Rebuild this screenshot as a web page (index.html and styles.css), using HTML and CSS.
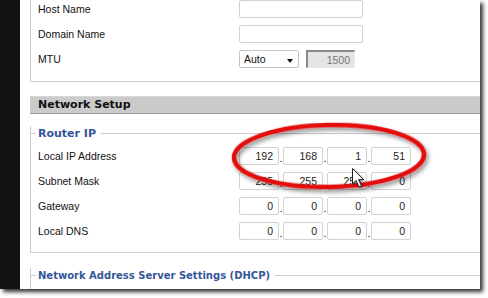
FILE: index.html
```html
<!DOCTYPE html>
<html lang="en">
<head>
    <meta charset="UTF-8">
    <title>Network Setup</title>
    <link rel="stylesheet" href="styles.css">
</head>
<body>
    <div class="screen">
        <div class="sheet">
            <div class="strip"></div>
            <div class="page">

                <div class="group top-group">
                    <div class="row">
                        <div class="label">Host Name</div>
                        <div class="field text-field"></div>
                    </div>
                    <div class="row">
                        <div class="label">Domain Name</div>
                        <div class="field text-field"></div>
                    </div>
                    <div class="row">
                        <div class="label">MTU</div>
                        <div class="field select-field">Auto<span class="caret"></span></div>
                        <div class="field mtu-value">1500</div>
                    </div>
                </div>

                <div class="section-bar">Network Setup</div>

                <div class="group legend-group">
                    <div class="legend">Router IP</div>
                    <div class="row">
                        <div class="label">Local IP Address</div>
                        <div class="ip">
                            <div class="field octet">192</div><span class="dot">.</span>
                            <div class="field octet">168</div><span class="dot">.</span>
                            <div class="field octet">1</div><span class="dot">.</span>
                            <div class="field octet">51</div>
                        </div>
                    </div>
                    <div class="row">
                        <div class="label">Subnet Mask</div>
                        <div class="ip">
                            <div class="field octet">255</div><span class="dot">.</span>
                            <div class="field octet">255</div><span class="dot">.</span>
                            <div class="field octet">255</div><span class="dot">.</span>
                            <div class="field octet">0</div>
                        </div>
                    </div>
                    <div class="row">
                        <div class="label">Gateway</div>
                        <div class="ip">
                            <div class="field octet">0</div><span class="dot">.</span>
                            <div class="field octet">0</div><span class="dot">.</span>
                            <div class="field octet">0</div><span class="dot">.</span>
                            <div class="field octet">0</div>
                        </div>
                    </div>
                    <div class="row">
                        <div class="label">Local DNS</div>
                        <div class="ip">
                            <div class="field octet">0</div><span class="dot">.</span>
                            <div class="field octet">0</div><span class="dot">.</span>
                            <div class="field octet">0</div><span class="dot">.</span>
                            <div class="field octet">0</div>
                        </div>
                    </div>
                </div>

                <div class="group legend-group dhcp-group">
                    <div class="legend">Network Address Server Settings (DHCP)</div>
                </div>

                <!-- annotation drawn over the form -->
                <svg class="ring" width="230" height="90" viewBox="0 0 230 90">
                    <defs>
                        <filter id="soft" x="-10%" y="-20%" width="120%" height="150%">
                            <feDropShadow dx="2" dy="3" stdDeviation="2" flood-color="#000" flood-opacity="0.45"/>
                        </filter>
                    </defs>
                    <ellipse cx="104" cy="38" rx="95" ry="31" transform="rotate(-1 104 38)"
                             fill="none" stroke="#e3100f" stroke-width="4.5" filter="url(#soft)"/>
                </svg>

                <svg class="pointer" width="16" height="24" viewBox="0 0 16 24">
                    <path d="M1.5 1.5 L1.5 17 L5 13.5 L8 20 L10.5 19 L7.6 12.6 L12.5 12.6 Z"
                          fill="#fff" stroke="#222" stroke-width="1" stroke-linejoin="round"/>
                </svg>
            </div>
        </div>
    </div>
</body>
</html>
```

FILE: styles.css
```css
body {
    margin: 0;
    background: #fff;
    font-family: "Liberation Sans", Arial, sans-serif;
    font-size: 10.5px;
    color: #111;
}
.screen {
    width: 488px;
    height: 298px;
    overflow: hidden;
}
.sheet {
    display: flex;
    width: 480px;
    height: 289px;
    box-shadow: 3px 3px 4px rgba(0, 0, 0, 0.8);
}
.strip {
    width: 20px;
    flex: none;
    background: #111;
}
.page {
    position: relative;
    flex: 1;
    background: #fff;
    overflow: hidden;
    padding-left: 10px;
}
.group {
    width: 460px;
    border: 1px solid #cdcdcd;
    border-top: none;
    padding: 0 0 12px 7px;
}
.top-group {
    padding-bottom: 13px;
}
.row {
    display: flex;
    align-items: center;
    height: 18px;
}
.row + .row {
    margin-top: 7px;
}
.label {
    width: 201px;
    flex: none;
}
.field {
    box-sizing: border-box;
    height: 18px;
    border: 1px solid #d2d2d2;
    border-radius: 2px;
    background: #fff;
    display: flex;
    align-items: center;
}
.text-field {
    width: 124px;
}
.select-field {
    position: relative;
    width: 60px;
    padding-left: 4px;
    border-color: #c4c4c4;
}
.caret {
    position: absolute;
    right: 5px;
    top: 8px;
    border-left: 3.5px solid transparent;
    border-right: 3.5px solid transparent;
    border-top: 4px solid #111;
}
.mtu-value {
    width: 49px;
    margin-left: 7px;
    justify-content: flex-end;
    padding-right: 4px;
    background: #e4e4e4;
    color: #777;
    border-radius: 0;
    border-top: 2px solid #8a8a8a;
    border-left: 2px solid #8a8a8a;
    border-right: 1px solid #e9e9e9;
    border-bottom: 1px solid #e9e9e9;
}
.section-bar {
    box-sizing: border-box;
    width: 460px;
    height: 18px;
    margin-top: 14px;
    padding-left: 8px;
    background: #cbcbcb;
    border-top: 1px solid #d8d8d8;
    border-bottom: 1px solid #9c9c9c;
    font-family: "DejaVu Sans", Verdana, sans-serif;
    font-weight: bold;
    font-size: 11px;
    line-height: 16px;
    color: #111;
}
.legend-group {
    margin-top: 19px;
}
.dhcp-group {
    margin-top: 22px;
    height: 30px;
}
.legend {
    display: flex;
    align-items: center;
    gap: 2px;
    height: 14px;
    margin: -7px 0 7px -7px;
    font-family: "DejaVu Sans", Verdana, sans-serif;
    font-weight: bold;
    font-size: 11px;
    color: #34569a;
    white-space: nowrap;
}
.dhcp-group .legend {
    font-size: 10px;
}
.legend::before {
    content: "";
    width: 5px;
    height: 1px;
    background: #cdcdcd;
}
.legend::after {
    content: "";
    flex: 1;
    height: 1px;
    margin-left: 3px;
    background: #cdcdcd;
}
.ip {
    display: flex;
    align-items: center;
}
.octet {
    width: 40px;
    justify-content: flex-end;
    padding-right: 5px;
    color: #222;
}
.dot {
    width: 4px;
    text-align: center;
    align-self: flex-end;
    line-height: 14px;
}
.ring {
    position: absolute;
    left: 205px;
    top: 118px;
}
.pointer {
    position: absolute;
    left: 331px;
    top: 167px;
    filter: drop-shadow(1px 1px 1px rgba(0, 0, 0, 0.4));
}
```
